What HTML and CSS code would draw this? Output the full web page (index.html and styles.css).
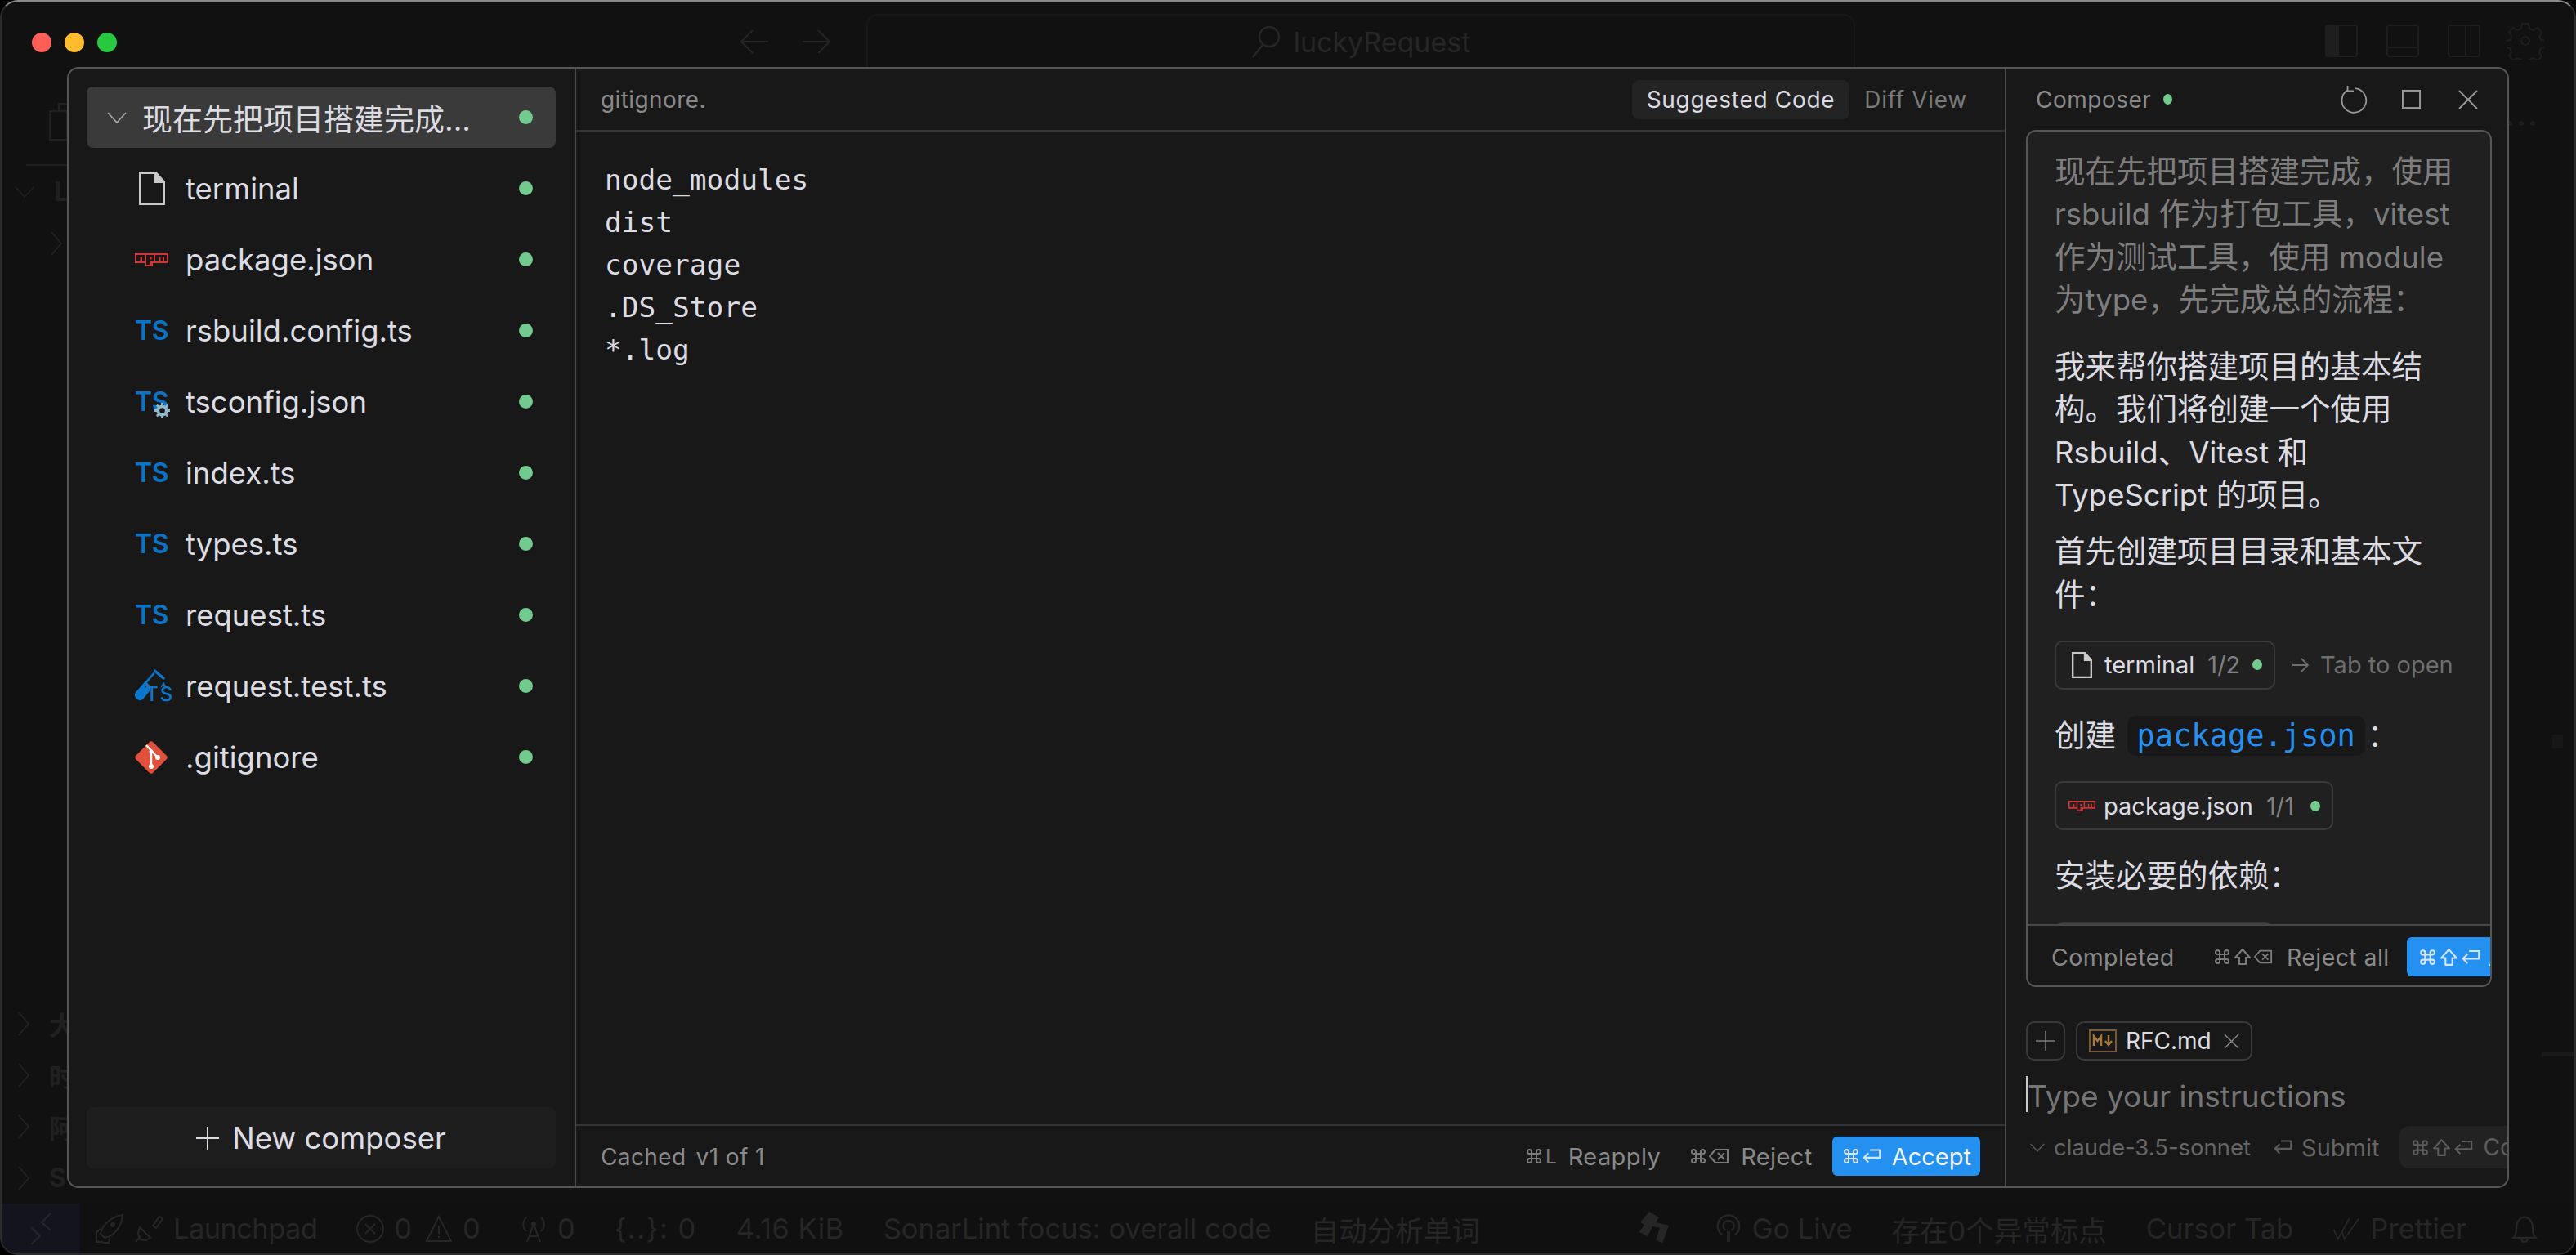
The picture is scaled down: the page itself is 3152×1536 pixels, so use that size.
FILE: index.html
```html
<!DOCTYPE html>
<html lang="zh">
<head>
<meta charset="utf-8">
<title>Composer</title>
<link rel="stylesheet" href="styles.css">
</head>
<body>
<svg class="defs" aria-hidden="true">
  <symbol id="cmd" viewBox="0 0 24 24"><path d="M9 9h6v6H9z M9 9H6.5A2.5 2.5 0 1 1 9 6.5V9 M15 9V6.5A2.5 2.5 0 1 1 17.5 9H15 M15 15h2.5A2.5 2.5 0 1 1 15 17.5V15 M9 15v2.5A2.5 2.5 0 1 1 6.5 15H9" fill="none" stroke="currentColor" stroke-width="2"/></symbol>
  <symbol id="shift" viewBox="0 0 24 24"><path d="M12 3l9 10h-5v8H8v-8H3z" fill="none" stroke="currentColor" stroke-width="2" stroke-linejoin="round"/></symbol>
  <symbol id="ret" viewBox="0 0 28 24"><path d="M12 4h13v10H4 M10 8l-6 6 6 6" fill="none" stroke="currentColor" stroke-width="2.2"/></symbol>
  <symbol id="back" viewBox="0 0 26 24"><path d="M9 4h15v16H9l-7-8z M12 8l8 8 M20 8l-8 8" fill="none" stroke="currentColor" stroke-width="2" stroke-linejoin="round"/></symbol>
  <symbol id="file" viewBox="0 0 32 41"><path d="M1.5 1.5h19l10 11v27h-29z M20.5 1.5v11h10" fill="none" stroke="currentColor" stroke-width="3"/><path d="M20 1l11 12H20z" fill="currentColor"/></symbol>
  <symbol id="npm" viewBox="0 0 41 16"><path fill="#cb3837" fill-rule="evenodd" d="M0 0h41v12H22v4H13v-4H0z M2 2h10v8H9V4.500H6.500V10H2z M14 2h9v8h-5v4h-4z M18 4.500h2.500V7.500H18z M25 2h14v8h-3V4.500h-2V10h-2.500V4.500h-2V10H25z"/></symbol>
  <symbol id="test" viewBox="0 0 44 42"><path fill="#0b78d0" d="M25 0l13 11-2 2.500-13-11z"/><path fill="none" stroke="#0b78d0" stroke-width="2.500" d="M24 5L12 19"/><path fill="#0b78d0" d="M13 15l9 8-12 15c-3 2-6 1-8-1s-3-5-1-8z"/><path fill="#0b78d0" d="M36 16l4 7h-8z"/></symbol>
  <symbol id="git" viewBox="0 0 40 40"><path fill="#e0503a" d="M17.500 1.500a3.500 3.500 0 0 1 5 0l16 16a3.500 3.500 0 0 1 0 5l-16 16a3.500 3.500 0 0 1-5 0l-16-16a3.500 3.500 0 0 1 0-5z"/><path fill="none" stroke="#fff" stroke-width="2.400" d="M14 5l14 15 M20 12v19"/><circle cx="28" cy="20" r="3" fill="#fff"/><circle cx="20" cy="31" r="3" fill="#fff"/><circle cx="20" cy="13" r="2.500" fill="#fff"/></symbol>
  <symbol id="chev" viewBox="0 0 24 14"><path d="M1 1l11 12L23 1" fill="none" stroke="currentColor" stroke-width="1.700"/></symbol>
  <symbol id="chevr" viewBox="0 0 14 30"><path d="M1 1l12 14L1 29" fill="none" stroke="currentColor" stroke-width="2"/></symbol>
</svg>

<div class="window">
  <header class="titlebar">
    <div class="traffic">
      <span class="light light-red"></span>
      <span class="light light-yellow"></span>
      <span class="light light-green"></span>
    </div>
    <div class="nav">
      <svg class="nav-ico" viewBox="0 0 36 32"><path d="M35 16H2 M16 2L2 16l14 14" fill="none" stroke="currentColor" stroke-width="2"/></svg>
      <svg class="nav-ico" viewBox="0 0 36 32"><path d="M1 16h33 M20 2l14 14-14 14" fill="none" stroke="currentColor" stroke-width="2"/></svg>
    </div>
    <div class="search">
      <svg class="search-ico" viewBox="0 0 36 40"><circle cx="22" cy="14" r="12" fill="none" stroke="currentColor" stroke-width="2.500"/><path d="M14 24L2 39" fill="none" stroke="currentColor" stroke-width="2.500"/></svg>
      <span>luckyRequest</span>
    </div>
    <div class="layout-icons">
      <svg class="layout-ico" viewBox="0 0 40 40"><rect x="1" y="1" width="38" height="38" rx="3" fill="none" stroke="currentColor" stroke-width="2"/><rect x="1" y="1" width="16" height="38" fill="currentColor"/></svg>
      <svg class="layout-ico" viewBox="0 0 40 40"><rect x="1" y="1" width="38" height="38" rx="3" fill="none" stroke="currentColor" stroke-width="2"/><path d="M1 28h38" stroke="currentColor" stroke-width="2"/></svg>
      <svg class="layout-ico" viewBox="0 0 40 40"><rect x="1" y="1" width="38" height="38" rx="3" fill="none" stroke="currentColor" stroke-width="2"/><path d="M22 1v38" stroke="currentColor" stroke-width="2"/></svg>
      <svg class="gear-ico" viewBox="0 0 46 46"><circle cx="23" cy="23" r="5" fill="none" stroke="currentColor" stroke-width="2"/><path d="M19 2h8l1 6 5 2 5-3 5 6-3 5 2 4 6 1v8l-6 1-2 5 3 5-5 5-5-3-5 2-1 5h-8l-1-5-5-2-5 3-5-6 3-4-2-5-5-1v-8l6-1 1-5-3-5 5-5 5 3 5-2z" fill="none" stroke="currentColor" stroke-width="2" stroke-linejoin="round"/></svg>
    </div>
  </header>

  <div class="workspace">
    <aside class="bg-side">
      <svg class="bg-copy" viewBox="0 0 30 46"><path d="M12 10V1h18v34H22 M1 10h21v35H1z" fill="none" stroke="currentColor" stroke-width="2"/></svg>
      <div class="bg-rule"></div>
      <div class="bg-row"><svg class="bg-chev-down"><use href="#chev"/></svg><b>LU</b></div>
      <div class="bg-child"><svg class="bg-chev"><use href="#chevr"/></svg></div>
      <div class="bg-spacer"></div>
      <div class="bg-row"><svg class="bg-chev"><use href="#chevr"/></svg><b>大</b></div>
      <div class="bg-row"><svg class="bg-chev"><use href="#chevr"/></svg><b>时</b></div>
      <div class="bg-row"><svg class="bg-chev"><use href="#chevr"/></svg><b>阿</b></div>
      <div class="bg-row"><svg class="bg-chev"><use href="#chevr"/></svg><b>S</b></div>
    </aside>
    <aside class="bg-right">
      <div class="bg-dots"><i></i><i></i><i></i></div>
      <div class="bg-mark"></div>
      <div class="bg-plus"></div>
    </aside>
  </div>

  <footer class="statusbar">
    <div class="status-group">
      <span class="remote"><svg viewBox="0 0 26 40" class="remote-ico"><path d="M1 18l11 11L1 39 M25 1L14 12l11 10" fill="none" stroke="currentColor" stroke-width="2"/></svg></span>
      <span class="st st-launch">
        <svg class="st-ico-lg" viewBox="0 0 36 36"><path d="M34 1C20 3 9 13 7 24l5 5c11-2 21-13 22-28z M7 18l-5 4v12h8 M18 29l-1 6h-7" fill="none" stroke="currentColor" stroke-width="2"/><circle cx="22" cy="13" r="3" fill="currentColor"/></svg>
        <svg class="st-ico-lg" viewBox="0 0 36 36"><path d="M2 34l6-7 M7 16l13 13 -5 3-8-1-2-8z M23 14l8-11 4 3-8 11z" fill="none" stroke="currentColor" stroke-width="2"/></svg>
        Launchpad
      </span>
      <span class="st st-counts">
        <svg class="st-ico" viewBox="0 0 34 34"><circle cx="17" cy="17" r="16" fill="none" stroke="currentColor" stroke-width="2"/><path d="M11 11l12 12 M23 11L11 23" stroke="currentColor" stroke-width="2"/></svg>0
        <svg class="st-ico st-ico-warn" viewBox="0 0 34 34"><path d="M17 2l15 30H2z M17 13v10 M17 26v2" fill="none" stroke="currentColor" stroke-width="2"/></svg>0
      </span>
      <span class="st st-net">
        <svg class="st-ico" viewBox="0 0 34 34"><path d="M17 11L9 33 M17 11l8 22 M12 26h10 M8 3C3 8 3 15 8 20 M26 3c5 5 5 12 0 17" fill="none" stroke="currentColor" stroke-width="2"/><circle cx="17" cy="11" r="3" fill="currentColor"/></svg>0
      </span>
      <span class="st st-spaced">{..}: 0</span>
      <span class="st st-size">4.16 KiB</span>
      <span class="st">SonarLint focus: overall code</span>
      <span class="st">自动分析单词</span>
    </div>
    <div class="status-group status-right">
      <svg class="st-star" viewBox="0 0 40 44"><path d="M14 1l12 7-4 6 16 4-8 22-8-5 5-14-9-2-6 12L2 26l6-9-5-3z" fill="currentColor"/></svg>
      <span class="st st-live">
        <svg class="st-ico" viewBox="0 0 30 38"><path d="M7 27a14 14 0 1 1 16 0 M11 21a7 7 0 1 1 8 0" fill="none" stroke="currentColor" stroke-width="2.500"/><path d="M13 22h4v14h-4z" fill="currentColor"/></svg>
        Go Live
      </span>
      <span class="st">存在0个异常标点</span>
      <span class="st">Cursor Tab</span>
      <span class="st st-pret">
        <svg class="st-ico" viewBox="0 0 40 34"><path d="M2 18l6 14L24 2 M14 20l3 12L38 2" fill="none" stroke="currentColor" stroke-width="2"/></svg>
        Prettier
      </span>
      <svg class="st-ico st-bell" viewBox="0 0 34 40"><path d="M2 32c3-3 4-6 4-14 0-8 5-14 11-14s11 6 11 14c0 8 1 11 4 14z M13 34c0 5 8 5 8 0" fill="none" stroke="currentColor" stroke-width="2.500"/></svg>
    </div>
  </footer>

  <section class="modal">
    <nav class="sidebar">
      <div class="tree">
        <div class="tree-head">
          <svg class="tree-chev"><use href="#chev"/></svg>
          <span class="tree-title">现在先把项目搭建完成...</span>
          <span class="dot"></span>
        </div>
        <div class="tree-row"><span class="ficon"><svg class="ico-file"><use href="#file"/></svg></span><span class="fname">terminal</span><span class="dot"></span></div>
        <div class="tree-row"><span class="ficon"><svg class="ico-npm"><use href="#npm"/></svg></span><span class="fname">package.json</span><span class="dot"></span></div>
        <div class="tree-row"><span class="ficon"><span class="ts">TS</span></span><span class="fname">rsbuild.config.ts</span><span class="dot"></span></div>
        <div class="tree-row"><span class="ficon"><span class="ts">TS</span><svg class="ts-gear" viewBox="0 0 20 20"><circle cx="10" cy="10" r="5.500" fill="#181818" stroke="#8fb9cc" stroke-width="4"/><path d="M10 0v4 M10 16v4 M0 10h4 M16 10h4 M3 3l3 3 M14 14l3 3 M17 3l-3 3 M6 14l-3 3" stroke="#8fb9cc" stroke-width="3"/></svg></span><span class="fname">tsconfig.json</span><span class="dot"></span></div>
        <div class="tree-row"><span class="ficon"><span class="ts">TS</span></span><span class="fname">index.ts</span><span class="dot"></span></div>
        <div class="tree-row"><span class="ficon"><span class="ts">TS</span></span><span class="fname">types.ts</span><span class="dot"></span></div>
        <div class="tree-row"><span class="ficon"><span class="ts">TS</span></span><span class="fname">request.ts</span><span class="dot"></span></div>
        <div class="tree-row"><span class="ficon"><svg class="ico-test"><use href="#test"/></svg><span class="ts-mini">TS</span></span><span class="fname">request.test.ts</span><span class="dot"></span></div>
        <div class="tree-row"><span class="ficon"><svg class="ico-git"><use href="#git"/></svg></span><span class="fname">.gitignore</span><span class="dot"></span></div>
      </div>
      <button class="new-btn"><svg class="new-plus" viewBox="0 0 28 28"><path d="M14 0v28 M0 14h28" stroke="currentColor" stroke-width="2"/></svg>New composer</button>
    </nav>

    <main class="editor">
      <div class="editor-head">
        <span class="muted-label">gitignore.</span>
        <div class="tabs">
          <span class="tab tab-active">Suggested Code</span>
          <span class="tab">Diff View</span>
        </div>
      </div>
      <pre class="code">node_modules
dist
coverage
.DS_Store
*.log</pre>
      <div class="editor-foot">
        <span class="muted-label">Cached</span>
        <span class="muted-label foot-version">v1 of 1</span>
        <div class="foot-actions">
          <span class="action"><svg class="k"><use href="#cmd"/></svg><span class="k-l">L</span><span class="action-text">Reapply</span></span>
          <span class="action"><svg class="k"><use href="#cmd"/></svg><svg class="k-w"><use href="#back"/></svg><span class="action-text">Reject</span></span>
          <span class="accept"><svg class="k"><use href="#cmd"/></svg><svg class="k-w"><use href="#ret"/></svg><span class="accept-text">Accept</span></span>
        </div>
      </div>
    </main>

    <aside class="composer">
      <div class="comp-head">
        <span class="comp-title">Composer</span>
        <span class="dot dot-sm"></span>
        <div class="comp-tools">
          <svg class="tool tool-refresh" viewBox="0 0 32 32"><path d="M9 5a14 14 0 1 0 9-2 M9 0v6h7" fill="none" stroke="currentColor" stroke-width="1.700"/></svg>
          <svg class="tool tool-square" viewBox="0 0 24 24"><rect x="1" y="1" width="22" height="22" fill="none" stroke="currentColor" stroke-width="2"/></svg>
          <svg class="tool tool-close" viewBox="0 0 24 24"><path d="M1 1l22 22 M23 1L1 23" stroke="currentColor" stroke-width="1.800"/></svg>
        </div>
      </div>

      <div class="card">
        <div class="card-body">
          <p class="msg msg-user">现在先把项目搭建完成，使用<br><span class="lat">rsbuild</span> 作为打包工具，<span class="lat">vitest</span><br>作为测试工具，使用 <span class="lat">module</span><br>为<span class="lat">type</span>，先完成总的流程：</p>
          <p class="msg msg-a">我来帮你搭建项目的基本结<br>构。我们将创建一个使用<br><span class="lat">Rsbuild</span>、<span class="lat">Vitest</span> 和<br><span class="lat">TypeScript</span> 的项目。</p>
          <p class="msg msg-b">首先创建项目目录和基本文<br>件：</p>
          <div class="chip-row">
            <span class="chip"><svg class="chip-file"><use href="#file"/></svg><span class="chip-name">terminal</span><span class="chip-count">1/2</span><span class="dot dot-chip"></span></span>
            <span class="hint"><svg class="hint-arrow" viewBox="0 0 20 20"><path d="M0 10h19 M11 2l8 8-8 8" fill="none" stroke="currentColor" stroke-width="1.800"/></svg>Tab to open</span>
          </div>
          <p class="msg msg-c">创建 <code class="inline">package.json</code>：</p>
          <div class="chip-row">
            <span class="chip chip-pkg"><svg class="chip-npm"><use href="#npm"/></svg><span class="chip-name">package.json</span><span class="chip-count">1/1</span><span class="dot dot-chip"></span></span>
          </div>
          <p class="msg msg-c">安装必要的依赖：</p>
          <div class="chip-row"><span class="chip chip-next"></span></div>
        </div>
        <div class="card-foot">
          <span class="done">Completed</span>
          <span class="reject-all"><svg class="k2"><use href="#cmd"/></svg><svg class="k2"><use href="#shift"/></svg><svg class="k2"><use href="#back"/></svg><span class="reject-text">Reject all</span></span>
          <span class="accept-all"><svg class="k3"><use href="#cmd"/></svg><svg class="k3"><use href="#shift"/></svg><svg class="k3-w"><use href="#ret"/></svg><span class="accept-all-text">Accept all</span></span>
        </div>
      </div>

      <div class="attach">
        <span class="add"><svg class="add-ico" viewBox="0 0 24 24"><path d="M12 0v24 M0 12h24" stroke="currentColor" stroke-width="1.600"/></svg></span>
        <span class="file-pill">
          <svg class="md-ico" viewBox="0 0 34 28"><rect x="1" y="1" width="32" height="26" fill="none" stroke="#7a5a35" stroke-width="2"/><path d="M6 20V8l4.500 6L15 8v12" fill="none" stroke="#a9783f" stroke-width="2.400"/><path d="M24 7v11 M20 14l4 5 4-5" fill="none" stroke="#a9783f" stroke-width="2.400"/></svg>
          <span class="pill-name">RFC.md</span>
          <svg class="pill-x" viewBox="0 0 20 20"><path d="M1 1l18 18 M19 1L1 19" stroke="currentColor" stroke-width="1.500"/></svg>
        </span>
      </div>

      <div class="prompt"><span class="caret"></span><span class="placeholder">Type your instructions</span></div>

      <div class="comp-bottom">
        <svg class="model-chev"><use href="#chev"/></svg>
        <span class="model">claude-3.5-sonnet</span>
        <svg class="k-sub"><use href="#ret"/></svg>
        <span class="submit">Submit</span>
        <span class="co-btn"><svg class="k3"><use href="#cmd"/></svg><svg class="k3"><use href="#shift"/></svg><svg class="k3-w"><use href="#ret"/></svg><span class="co-text">Composer</span></span>
      </div>
    </aside>
  </section>
</div>
</body>
</html>
```

FILE: styles.css
```css
* { box-sizing: border-box; }
html, body { margin: 0; padding: 0; background: #000; }
body {
  width: 3152px;
  height: 1536px;
  overflow: hidden;
  font-family: Inter, "Noto Sans CJK SC", sans-serif;
  color: #dcdce2;
}
.defs { position: absolute; width: 0; height: 0; }

.window {
  position: relative;
  width: 3152px;
  height: 1536px;
  display: flex;
  flex-direction: column;
  background: #111;
  border: 2px solid #2c2c2c;
  border-top-color: #8a8a8a;
  border-radius: 22px;
  overflow: hidden;
  color: #252525;
}

/* dimmed window underneath */
.titlebar {
  height: 82px;
  flex: none;
  display: flex;
  align-items: flex-start;
  padding-left: 37px;
}
.traffic { display: flex; gap: 16px; margin-top: 38px; }
.light { width: 24px; height: 24px; border-radius: 50%; }
.light-red { background: #ff5f57; }
.light-yellow { background: #febc2e; }
.light-green { background: #28c840; }
.nav { display: flex; gap: 40px; margin: 33px 0 0 762px; }
.nav-ico { width: 36px; height: 32px; color: #252525; }
.search {
  display: flex;
  align-items: center;
  justify-content: center;
  gap: 16px;
  width: 1210px;
  height: 66px;
  margin: 15px 0 0 43px;
  border: 2px solid #181818;
  border-bottom: 0;
  border-radius: 14px 14px 0 0;
  font-size: 34px;
  color: #262626;
}
.search-ico { width: 36px; height: 40px; }
.layout-icons { display: flex; align-items: center; margin: 25px 37px 0 auto; gap: 35px; }
.layout-ico { width: 40px; height: 40px; color: #1e1e1e; }
.gear-ico { width: 46px; height: 46px; color: #1e1e1e; margin-left: -3px; }

.workspace { flex: 1; min-height: 0; display: flex; justify-content: space-between; }
.bg-side { width: 100px; display: flex; flex-direction: column; color: #202020; font-size: 32px; overflow: hidden; }
.bg-copy { width: 30px; height: 46px; margin: 42px 0 0 58px; }
.bg-rule { height: 2px; width: 60px; margin: 29px 0 0 30px; background: #1e1e1e; }
.bg-row { height: 63px; flex: none; display: flex; align-items: center; gap: 24px; padding-left: 20px; }
.bg-child { height: 63px; display: flex; align-items: center; padding-left: 60px; }
.bg-spacer { flex: 1; }
.bg-chev { width: 14px; height: 30px; flex: none; }
.bg-chev-down { width: 24px; height: 14px; flex: none; margin-left: -4px; }
.bg-right { width: 80px; display: flex; flex-direction: column; align-items: flex-end; }
.bg-dots { display: flex; gap: 8px; margin: 64px 48px 0 0; }
.bg-dots i { width: 6px; height: 6px; border-radius: 50%; background: #1e1e1e; }
.bg-mark { width: 13px; height: 17px; margin: 745px 14px 0 0; background: #171717; }
.bg-plus { width: 40px; height: 5px; margin-top: 372px; background: #1a1a1a; }

.statusbar {
  height: 61px;
  flex: none;
  display: flex;
  justify-content: space-between;
  font-size: 34.500px;
  background: #101010;
  color: #262626;
}
.status-group { display: flex; align-items: center; gap: 48px; }
.status-right { padding-right: 44px; gap: 48px; }
.remote { width: 96px; height: 61px; background: #14141f; display: flex; align-items: center; justify-content: center; color: #262633; margin-right: -30px; }
.remote-ico { width: 26px; height: 40px; }
.st { display: flex; align-items: center; gap: 12px; white-space: nowrap; }
.st-launch { letter-spacing: -.6px; }
.st-spaced { letter-spacing: 1.500px; }
.st-size { letter-spacing: .5px; }
.st-ico-lg { width: 36px; height: 36px; }
.st-ico { width: 34px; height: 36px; flex: none; }
.st-ico-warn { margin-left: 4px; }
.st-star { width: 40px; height: 44px; margin-right: 6px; }
.st-bell { margin-left: 6px; }

/* modal */
.modal {
  position: absolute;
  left: 80px;
  top: 80px;
  width: 2988px;
  height: 1372px;
  display: flex;
  background: #181818;
  border: 2px solid #565656;
  border-radius: 14px;
  overflow: hidden;
  color: #dcdce2;
}
.sidebar {
  width: 621px;
  flex: none;
  display: flex;
  flex-direction: column;
  justify-content: space-between;
  padding: 22px 23px 22px 22px;
  border-right: 2px solid #484848;
}
.tree { display: flex; flex-direction: column; }
.tree-head {
  height: 75px;
  margin-bottom: 6px;
  display: flex;
  align-items: center;
  padding: 0 28px 0 25px;
  background: #3a3a3a;
  border-radius: 8px;
}
.tree-chev { width: 24px; height: 14px; flex: none; margin-right: 19px; color: #a8a8a8; }
.tree-title { flex: 1; font-size: 37px; white-space: nowrap; }
.dot { width: 17px; height: 17px; border-radius: 50%; background: #72ca8e; flex: none; }
.tree-row { height: 87px; display: flex; align-items: center; padding: 0 28px 0 59px; }
.ficon { position: relative; width: 44px; height: 44px; flex: none; margin-right: 18px; display: flex; align-items: center; }
.fname { flex: 1; font-size: 36.500px; }
.ico-file { width: 32px; height: 41px; margin-left: 5px; color: #c9c9c9; }
.ico-npm { width: 41px; height: 16px; }
.ts { font-size: 32px; font-weight: 600; color: #0a74c9; line-height: 1; letter-spacing: -.5px; }
.ts-gear { position: absolute; left: 24px; top: 23px; width: 19px; height: 19px; }
.ico-test { width: 43px; height: 41px; }
.ts-mini {
  position: absolute;
  left: 13px;
  top: 20px;
  font-size: 24px;
  line-height: 1;
  font-weight: 500;
  letter-spacing: 2px;
  color: #0b78d0;
  text-shadow: -1px -1px 0 #181818, 1px -1px 0 #181818;
}
.ico-git { width: 40px; height: 40px; }
.new-btn {
  height: 75px;
  border: 0;
  border-radius: 8px;
  background: #1e1e1e;
  color: #dcdce2;
  font: inherit;
  font-size: 36.500px;
  display: flex;
  align-items: center;
  justify-content: center;
  gap: 16px;
}
.new-plus { width: 28px; height: 28px; }

/* editor */
.editor { flex: 1; min-width: 0; display: flex; flex-direction: column; border-right: 2px solid #484848; }
.editor-head {
  height: 77px;
  flex: none;
  display: flex;
  align-items: center;
  justify-content: space-between;
  padding: 0 46px 0 30px;
  border-bottom: 2px solid #333;
}
.muted-label { font-size: 28px; color: #8a8a8a; letter-spacing: .4px; }
.tabs { display: flex; align-items: center; gap: 0; }
.tab { font-size: 28px; letter-spacing: .7px; color: #7a7a7a; padding: 0 18px; height: 48px; display: flex; align-items: center; border-radius: 8px; }
.tab:last-child { padding-right: 0; }
.tab-active { background: #232323; color: #dcdce2; }
.code {
  flex: 1;
  margin: 0;
  padding: 33px 0 0 35px;
  font-family: "DejaVu Sans Mono", monospace;
  font-size: 34.500px;
  line-height: 52px;
  color: #dcdce2;
}
.editor-foot {
  height: 76px;
  flex: none;
  display: flex;
  align-items: center;
  padding: 2px 30px 0;
  border-top: 2px solid #333;
}
.foot-version { margin-left: 12px; }
.foot-actions { margin-left: auto; display: flex; align-items: center; gap: 34px; margin-top: -2px; }
.action { display: flex; align-items: center; font-size: 29px; color: #8a8a8a; }
.k { width: 24px; height: 24px; flex: none; color: #7c7c7c; }
.k-w { width: 26px; height: 24px; flex: none; color: #7c7c7c; }
.k-l { font-size: 24px; color: #7c7c7c; margin-left: 2px; }
.action-text { margin-left: 14px; letter-spacing: .4px; }
.accept {
  height: 48px;
  padding: 0 11px;
  margin-left: -10px;
  display: flex;
  align-items: center;
  background: #2490f0;
  border-radius: 6px;
  font-size: 29px;
  color: #f2f6fc;
}
.accept .k, .accept .k-w { color: #d4e6fa; }
.accept-text { margin-left: 12px; }

/* composer */
.composer { width: 613px; flex: none; display: flex; flex-direction: column; overflow: hidden; }
.comp-head { height: 75px; flex: none; display: flex; align-items: center; padding: 0 36px 0 36px; }
.comp-title { font-size: 28px; color: #8a8a8a; letter-spacing: .5px; }
.dot-sm { width: 11px; height: 13px; margin-left: 15px; }
.comp-tools { margin-left: auto; display: flex; align-items: center; }
.tool { color: #9a9a9a; flex: none; }
.tool-refresh { width: 34px; height: 34px; margin-right: 42px; }
.tool-square { width: 23px; height: 23px; margin-right: 46px; }
.tool-close { width: 24px; height: 24px; }

.card {
  width: 570px;
  height: 1049px;
  margin-left: 24px;
  flex: none;
  display: flex;
  flex-direction: column;
  background: #202020;
  border: 2px solid #565656;
  border-radius: 12px;
  overflow: hidden;
}
.card-body { flex: 1; min-height: 0; overflow: hidden; padding: 23px 0 0 33px; }
.msg { margin: 0; font-size: 37.500px; line-height: 52.300px; white-space: nowrap; color: #dcdce2; }
.lat { font-size: 36.500px; }
.msg-user { color: #7e7e7e; }
.msg-a { margin-top: 30px; }
.msg-b { margin-top: 17px; }
.msg-c { margin-top: 30px; }
.chip-row { display: flex; align-items: center; margin-top: 30px; height: 60px; }
.chip {
  height: 60px;
  width: 270px;
  flex: none;
  display: flex;
  align-items: center;
  padding: 0 14px 0 19px;
  border: 2px solid #3a3a3a;
  border-radius: 10px;
  font-size: 29px;
}
.chip-pkg { width: 341px; padding-left: 15px; }
.chip-next { width: 268px; }
.chip-file { width: 25px; height: 32px; margin-right: 15px; color: #c9c9c9; flex: none; }
.chip-npm { width: 33px; height: 13px; margin-right: 10px; flex: none; }
.chip-name { flex: none; }
.chip-count { margin-left: 16px; color: #808080; }
.dot-chip { width: 12px; height: 13px; margin-left: auto; }
.hint { margin-left: 21px; display: flex; align-items: center; gap: 14px; font-size: 29px; color: #6e6e6e; white-space: nowrap; }
.hint-arrow { width: 20px; height: 20px; flex: none; }
.inline {
  display: inline-block;
  font-family: "DejaVu Sans Mono", monospace;
  font-size: 37px;
  line-height: 49px;
  padding: 0 12px;
  margin: 0 3px;
  background: #181818;
  border-radius: 10px;
  color: #2490f0;
}
.card-foot {
  height: 75px;
  flex: none;
  display: flex;
  align-items: center;
  padding: 3px 0 0 29px;
  background: #181818;
  border-top: 2px solid #484848;
}
.done { font-size: 28.500px; color: #8a8a8a; width: 197px; flex: none; letter-spacing: .4px; }
.reject-all { display: flex; align-items: center; font-size: 28.500px; color: #8a8a8a; width: 238px; flex: none; }
.k2 { width: 24px; height: 24px; color: #7c7c7c; flex: none; margin-right: 1px; }
.reject-text { margin-left: 16px; letter-spacing: .4px; }
.accept-all {
  height: 48px;
  width: 120px;
  flex: none;
  display: flex;
  align-items: center;
  padding-left: 13px;
  background: #2490f0;
  border-radius: 6px 0 0 6px;
  font-size: 29px;
  color: #f2f6fc;
  white-space: nowrap;
  overflow: hidden;
}
.accept-all .k3, .accept-all .k3-w { color: #d4e6fa; }
.k3 { width: 25px; height: 25px; flex: none; margin-right: 1px; }
.k3-w { width: 26px; height: 25px; flex: none; }
.accept-all-text { margin-left: 9px; }

.attach { display: flex; align-items: center; gap: 13px; margin: 42px 0 0 24px; height: 48px; flex: none; }
.add, .file-pill {
  height: 48px;
  display: flex;
  align-items: center;
  border: 2px solid #3a3a3a;
  border-radius: 10px;
}
.add { width: 48px; justify-content: center; color: #7c7c7c; }
.add-ico { width: 24px; height: 24px; }
.file-pill { padding: 0 14px; width: 216px; }
.md-ico { width: 34px; height: 28px; flex: none; margin-right: 11px; }
.pill-name { font-size: 28px; color: #dcdce2; }
.pill-x { width: 19px; height: 19px; color: #8a8a8a; flex: none; margin-left: auto; }

.prompt { position: relative; height: 44px; margin: 21px 0 0 24px; flex: none; display: flex; align-items: center; }
.caret { position: absolute; left: 0; top: -2px; width: 2px; height: 44px; background: #c8c8c8; }
.placeholder { font-size: 37px; color: #757575; margin-left: 2px; white-space: nowrap; }

.comp-bottom { display: flex; align-items: center; height: 52px; margin-top: 15px; padding-left: 29px; flex: none; }
.model-chev { width: 18px; height: 11px; flex: none; color: #5c5c5c; margin-right: 11px; }
.model { font-size: 27.500px; color: #666; white-space: nowrap; }
.submit { font-size: 29px; color: #666; white-space: nowrap; }
.k-sub { width: 26px; height: 24px; color: #5c5c5c; flex: none; margin: 0 10px 0 26px; }
.co-btn {
  height: 52px;
  width: 200px;
  flex: none;
  display: flex;
  align-items: center;
  margin-left: 24px;
  padding-left: 13px;
  background: #222;
  border-radius: 12px 0 0 12px;
  color: #5c5c5c;
  font-size: 28px;
  white-space: nowrap;
  overflow: hidden;
}
.co-text { margin-left: 12px; }
```
